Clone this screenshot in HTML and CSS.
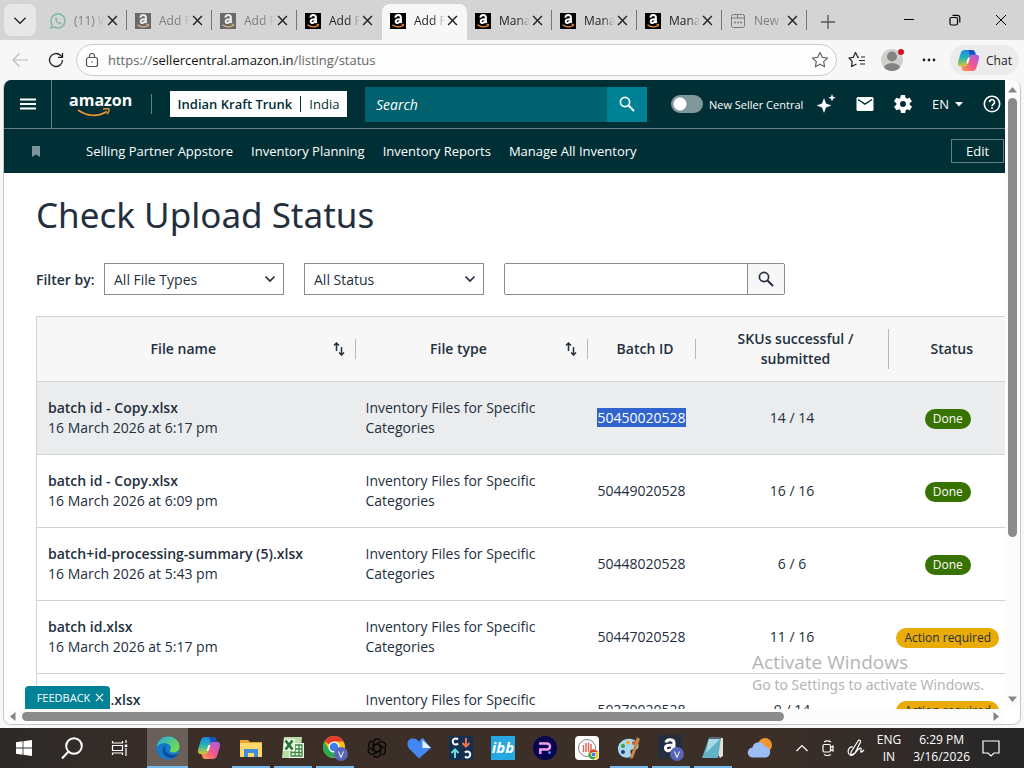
FILE: index.html
```
<!DOCTYPE html>
<html lang="en">
<head>
    <meta charset="utf-8">
    <title>Check Upload Status</title>
    <link rel="stylesheet" href="styles.css">
</head>
<body>
    <!-- Shared icons -->
    <svg class="symbols" width="0" height="0">
        <symbol id="amazon" viewBox="0 0 16 16">
            <rect width="16" height="16" fill="#000"/>
            <path d="M5.3 4.6C5.6 2.9 6.8 2 8.3 2c1.700 0 2.600 1 2.600 2.600v3.600c0 .8.4 1.200.8 1.700M10 6.200c-2.500-.1-4.300.4-4.300 2.300 0 2.400 3.900 2.100 4.300-.8" fill="none" stroke="#fff" stroke-width="2"/>
            <path d="M2.500 11.800c3.200 2.400 7.300 2.500 10.600.6" fill="none" stroke="#e8912d" stroke-width="1.200"/>
            <path d="M11.500 11.400l2.300-.1-.6 2" fill="none" stroke="#e8912d"/>
        </symbol>
        <symbol id="close" viewBox="0 0 10 10">
            <path d="M1 1l8 8M9 1L1 9" fill="none" stroke="currentColor" stroke-width="1.300"/>
        </symbol>
        <symbol id="chevron" viewBox="0 0 12 8">
            <path d="M1.500 1.500L6 6l4.500-4.500" fill="none" stroke="currentColor" stroke-width="1.700"/>
        </symbol>
        <symbol id="chevron-thin" viewBox="0 0 12 8">
            <path d="M1 1.500L6 6.500l5-5" fill="none" stroke="currentColor" stroke-width="1.100"/>
        </symbol>
        <symbol id="search" viewBox="0 0 16 16">
            <circle cx="6" cy="6" r="4.600" fill="none" stroke="currentColor" stroke-width="1.700"/>
            <path d="M9.500 9.500L15 15" stroke="currentColor" stroke-width="2"/>
        </symbol>
        <symbol id="sort" viewBox="0 0 12 16">
            <path d="M3.500 10V2M1 4.500L3.500 2 6 4.500M8.500 6v8M6 11.500L8.500 14l2.500-2.500" fill="none" stroke="currentColor" stroke-width="1.500"/>
        </symbol>
        <symbol id="copilot" viewBox="0 0 24 24">
            <linearGradient id="cpA" x1="0" y1="0" x2="0" y2="1"><stop offset="0" stop-color="#1787e8"/><stop offset=".5" stop-color="#28b6b0"/><stop offset="1" stop-color="#d7c42c"/></linearGradient>
            <linearGradient id="cpB" x1="1" y1="0" x2="0" y2="1"><stop offset="0" stop-color="#a45cf0"/><stop offset=".5" stop-color="#f0558b"/><stop offset="1" stop-color="#ff9d44"/></linearGradient>
            <path d="M9 1h7c2 0 2.500 1.500 3 3l.7 2H17c-2 0-2.800 1-3.300 2.700L11.400 16c-.5 1.700-1.400 2-3 2H4c-3 0-3.500-2-2.800-5L4 4c.6-2 2-3 5-3z" fill="url(#cpA)"/>
            <path d="M12 1h4c2 0 2.500 1.500 3 3l.7 2H17c-1.500 0-2.500.5-3 1.500z" fill="#1a4fc4"/>
            <path d="M15 23H8c-2 0-2.500-1.500-3-3l-.6-2H8c2 0 2.800-1 3.300-2.700L13.400 8c.5-1.500 1.400-2 3-2H20c3 0 3.500 2 2.800 5L20 20c-.6 2-2 3-5 3z" fill="url(#cpB)"/>
            <path d="M11.400 9h2l-1.800 6h-2z" fill="#fff"/>
        </symbol>
        <symbol id="chrome" viewBox="0 0 24 24">
            <circle cx="12" cy="12" r="11" fill="#fbc116"/>
            <path d="M12 12L2.500 6.500A11 11 0 0 1 21.500 6.500H12z" fill="#e33b2e"/>
            <path d="M12 12L7.200 14.800 2.500 6.500A11 11 0 0 0 12 23l4.800-8.200z" fill="#2da94f"/>
            <circle cx="12" cy="12" r="5.500" fill="#fff"/>
            <circle cx="12" cy="12" r="4.300" fill="#3b7ded"/>
        </symbol>
    </svg>

    <!-- Tab strip -->
    <div class="tabs">
        <button class="tab-menu" aria-label="Tab actions"><svg width="14" height="9"><use href="#chevron-thin"/></svg></button>
        <div class="tab faded">
            <svg width="16" height="16" viewBox="0 0 16 16" fill="none" stroke="#2f9f69" stroke-width="1.500"><path d="M1 15l1-3.600A7 7 0 1 1 4.700 14z"/><path d="M5.500 4.500c-1.200 1.500.3 5.800 4.700 6.900l1.300-1.500-1.700-1-.9.700c-1-.3-1.900-1.300-2.100-2.200l.6-.9-.6-1.900z" fill="#2f9f69" stroke="none"/></svg>
            <span class="tab-title">(11) W</span>
            <button class="tab-close" aria-label="Close tab"><svg width="11" height="11"><use href="#close"/></svg></button>
        </div>
        <div class="tab faded">
            <svg width="16" height="16"><use href="#amazon"/></svg>
            <span class="tab-title">Add P</span>
            <button class="tab-close" aria-label="Close tab"><svg width="11" height="11"><use href="#close"/></svg></button>
        </div>
        <div class="tab faded">
            <svg width="16" height="16"><use href="#amazon"/></svg>
            <span class="tab-title">Add P</span>
            <button class="tab-close" aria-label="Close tab"><svg width="11" height="11"><use href="#close"/></svg></button>
        </div>
        <div class="tab no-line">
            <svg width="16" height="16"><use href="#amazon"/></svg>
            <span class="tab-title">Add P</span>
            <button class="tab-close" aria-label="Close tab"><svg width="11" height="11"><use href="#close"/></svg></button>
        </div>
        <div class="tab active">
            <svg width="16" height="16"><use href="#amazon"/></svg>
            <span class="tab-title">Add P</span>
            <button class="tab-close" aria-label="Close tab"><svg width="11" height="11"><use href="#close"/></svg></button>
        </div>
        <div class="tab">
            <svg width="16" height="16"><use href="#amazon"/></svg>
            <span class="tab-title">Mana</span>
            <button class="tab-close" aria-label="Close tab"><svg width="11" height="11"><use href="#close"/></svg></button>
        </div>
        <div class="tab">
            <svg width="16" height="16"><use href="#amazon"/></svg>
            <span class="tab-title">Mana</span>
            <button class="tab-close" aria-label="Close tab"><svg width="11" height="11"><use href="#close"/></svg></button>
        </div>
        <div class="tab">
            <svg width="16" height="16"><use href="#amazon"/></svg>
            <span class="tab-title">Mana</span>
            <button class="tab-close" aria-label="Close tab"><svg width="11" height="11"><use href="#close"/></svg></button>
        </div>
        <div class="tab faded">
            <svg width="16" height="16" viewBox="0 0 16 16" fill="none" stroke="#222"><rect x="1.500" y="1.500" width="13" height="13" rx="2"/><path d="M1.500 5h6V1.500M7.500 5h7"/><path d="M4 9.500h2m1 0h2m1 0h2" stroke-width="1.600"/></svg>
            <span class="tab-title">New t</span>
            <button class="tab-close" aria-label="Close tab"><svg width="11" height="11"><use href="#close"/></svg></button>
        </div>
        <button class="new-tab" aria-label="New tab"><svg width="16" height="16" viewBox="0 0 16 16" stroke="#555" stroke-width="1.300"><path d="M8 1v14M1 8h14"/></svg></button>
        <div class="window-buttons">
            <button aria-label="Minimize"><svg width="12" height="12" viewBox="0 0 12 12" stroke="#000"><path d="M1 5.500h10"/></svg></button>
            <button aria-label="Restore"><svg width="12" height="12" viewBox="0 0 12 12" fill="none" stroke="#000" stroke-width="1.200"><rect x="1" y="3.500" width="7.500" height="7.500" rx="1.500"/><path d="M3.500 1.300h5a2.300 2.300 0 0 1 2.300 2.300v5"/></svg></button>
            <button aria-label="Close"><svg width="12" height="12" viewBox="0 0 12 12" stroke="#000"><path d="M1 1l10 10M11 1L1 11"/></svg></button>
        </div>
    </div>

    <!-- Address bar -->
    <div class="toolbar">
        <button class="tool" aria-label="Back"><svg width="18" height="16" viewBox="0 0 18 16" fill="none" stroke="#bbb" stroke-width="1.200"><path d="M17 8H2M8.500 1.500L2 8l6.500 6.500"/></svg></button>
        <button class="tool" aria-label="Reload"><svg width="16" height="16" viewBox="0 0 16 16" fill="none" stroke="#222" stroke-width="1.300"><path d="M14.500 8a6.500 6.500 0 1 1-2-4.700L14.500 5"/><path d="M14.500 1v4.300H10"/></svg></button>
        <div class="address">
            <svg width="14" height="16" viewBox="0 0 14 16" fill="none" stroke="#555" stroke-width="1.200"><rect x="1.500" y="5.500" width="11" height="9" rx="2"/><path d="M4.500 5.500V4a2.500 2.500 0 0 1 5 0v1.500"/><circle cx="7" cy="10" r=".8" fill="#555" stroke="none"/></svg>
            <span class="url">https://<b>sellercentral.amazon.in</b>/listing/status</span>
            <svg width="18" height="18" viewBox="0 0 18 18" fill="none" stroke="#666" stroke-width="1.200" stroke-linejoin="round"><path d="M9 1.500l2.300 4.800 5.200.7-3.800 3.600.9 5.200L9 13.300l-4.600 2.500.9-5.200L1.500 7l5.200-.7z"/></svg>
        </div>
        <button class="tool" aria-label="Favorites"><svg width="18" height="18" viewBox="0 0 18 18" fill="none" stroke="#222" stroke-width="1.200" stroke-linejoin="round"><path d="M11 6.300H9.800L7.500 1.500 5.300 6.300 1 7l3.200 3.400-.7 5.100 5-2.500M11 9.500h6M13 6h4M12 13h5"/></svg></button>
        <button class="tool" aria-label="Profile"><svg width="26" height="24" viewBox="0 0 26 24"><clipPath id="face"><circle cx="12" cy="12" r="11"/></clipPath><g clip-path="url(#face)"><path d="M0 0h24v24H0z" fill="#d2d0ce"/><circle cx="12" cy="8.500" r="5" fill="#858381"/><ellipse cx="12" cy="21" rx="8.500" ry="6" fill="#858381"/></g><circle cx="21" cy="4" r="3" fill="#d9101c"/></svg></button>
        <button class="tool" aria-label="Settings and more"><svg width="14" height="4" fill="#222"><circle cx="2" cy="2" r="1.400"/><circle cx="7" cy="2" r="1.400"/><circle cx="12" cy="2" r="1.400"/></svg></button>
        <button class="chat"><svg width="23" height="23"><use href="#copilot"/></svg>Chat</button>
    </div>

    <div class="frame">
        <div class="view">
            <header class="top">
                <button class="menu" aria-label="Menu"><svg width="16" height="12" viewBox="0 0 16 12" stroke="#fff" stroke-width="2"><path d="M0 1.500h16M0 6h16M0 10.500h16"/></svg></button>
                <a class="logo" href="#">amazon<svg width="34" height="9" viewBox="0 0 34 9" fill="none" stroke="#f0962e" stroke-width="1.700"><path d="M1 2c9 6.500 20 7 29 1.500"/><path d="M26 1.300c3-.8 5.500-.8 6 0s-.5 3-2 5" stroke-width="1.400"/></svg></a>
                <button class="account"><b>Indian Kraft Trunk</b><span>India</span></button>
                <form class="site-search">
                    <input type="text" placeholder="Search" aria-label="Search">
                    <button type="button" aria-label="Search"><svg width="16" height="16"><use href="#search"/></svg></button>
                </form>
                <label class="switch"><input type="checkbox"><span>New Seller Central</span></label>
                <nav class="top-icons">
                    <button aria-label="Assistant"><svg width="20" height="20" viewBox="0 0 20 20" fill="#fff"><path d="M8 4l2 5.500 5.500 2L10 13.500 8 19l-2-5.500L.5 11.500 6 9.500zM16 0l1 2.700 2.700 1L17 4.700 16 7.500l-1-2.800-2.700-1 2.700-1z"/></svg></button>
                    <button aria-label="Messages"><svg width="18" height="14" viewBox="0 0 18 14"><rect x=".5" width="17" height="14" rx="1.500" fill="#fff"/><path d="M2 2.500l7 4.700 7-4.700" fill="none" stroke="#002f36" stroke-width="1.500"/></svg></button>
                    <button aria-label="Settings"><svg width="18" height="18" viewBox="2 2 20 20" fill="#fff"><path d="M19.400 13a7.500 7.500 0 0 0 0-2l2.100-1.600a.5.5 0 0 0 .1-.7l-2-3.400a.5.5 0 0 0-.6-.2l-2.500 1a7 7 0 0 0-1.700-1l-.4-2.600A.5.5 0 0 0 14 2h-4a.5.5 0 0 0-.5.4l-.4 2.700a7 7 0 0 0-1.700 1l-2.500-1a.5.5 0 0 0-.6.200l-2 3.400c-.1.200 0 .5.100.7L4.600 11a7.500 7.500 0 0 0 0 2l-2.100 1.600a.5.5 0 0 0-.1.700l2 3.400c.1.200.4.300.6.200l2.500-1a7 7 0 0 0 1.700 1l.4 2.600c0 .3.200.5.500.5h4c.3 0 .5-.2.500-.4l.4-2.700a7 7 0 0 0 1.700-1l2.500 1c.2.100.5 0 .6-.2l2-3.400a.5.5 0 0 0-.1-.7zM12 15.300a3.300 3.300 0 1 1 0-6.600 3.300 3.300 0 0 1 0 6.600z"/></svg></button>
                    <button class="lang">EN<svg width="8" height="5" fill="#fff"><path d="M0 0h8L4 4.500z"/></svg></button>
                    <button aria-label="Help"><svg width="18" height="18" viewBox="0 0 18 18" fill="none" stroke="#fff" stroke-width="1.600"><circle cx="9" cy="9" r="7.700"/><path d="M6.500 7.200a2.500 2.500 0 1 1 3.900 2c-.9.700-1.400 1-1.400 2M9 12.300v1.700"/></svg></button>
                </nav>
            </header>
            <nav class="shortcuts">
                <svg class="bookmark" width="8" height="11" fill="#7b979b"><path d="M0 0h8v11L4 8.500 0 11z"/></svg>
                <a href="#">Selling Partner Appstore</a>
                <a href="#">Inventory Planning</a>
                <a href="#">Inventory Reports</a>
                <a href="#">Manage All Inventory</a>
                <button class="edit">Edit</button>
            </nav>

            <main class="content">
                <h1>Check Upload Status</h1>
                <div class="filters">
                    <label for="fileType">Filter by:</label>
                    <div class="select">
                        <select id="fileType"><option>All File Types</option></select>
                        <svg width="12" height="8"><use href="#chevron"/></svg>
                    </div>
                    <div class="select">
                        <select aria-label="Status"><option>All Status</option></select>
                        <svg width="12" height="8"><use href="#chevron"/></svg>
                    </div>
                    <form class="file-search">
                        <input type="text" aria-label="Search files">
                        <button type="button" aria-label="Search files"><svg width="16" height="16"><use href="#search"/></svg></button>
                    </form>
                </div>

                <table class="uploads">
                    <colgroup><col class="c-name"><col class="c-type"><col class="c-batch"><col class="c-skus"><col class="c-status"></colgroup>
                    <thead>
                        <tr>
                            <th><div class="head sortable"><span>File name</span><svg width="12" height="16"><use href="#sort"/></svg></div></th>
                            <th><div class="head sortable"><span>File type</span><svg width="12" height="16"><use href="#sort"/></svg></div></th>
                            <th><div class="head"><span>Batch ID</span></div></th>
                            <th><div class="head"><span>SKUs successful / submitted</span></div></th>
                            <th><div class="head last"><span>Status</span></div></th>
                        </tr>
                    </thead>
                    <tbody>
                        <tr class="selected">
                            <td><b>batch id - Copy.xlsx</b><br>16 March 2026 at 6:17 pm</td>
                            <td>Inventory Files for Specific Categories</td>
                            <td class="num"><mark>50450020528</mark></td>
                            <td class="num">14 / 14</td>
                            <td class="num"><span class="badge done">Done</span></td>
                        </tr>
                        <tr>
                            <td><b>batch id - Copy.xlsx</b><br>16 March 2026 at 6:09 pm</td>
                            <td>Inventory Files for Specific Categories</td>
                            <td class="num">50449020528</td>
                            <td class="num">16 / 16</td>
                            <td class="num"><span class="badge done">Done</span></td>
                        </tr>
                        <tr>
                            <td><b>batch+id-processing-summary (5).xlsx</b><br>16 March 2026 at 5:43 pm</td>
                            <td>Inventory Files for Specific Categories</td>
                            <td class="num">50448020528</td>
                            <td class="num">6 / 6</td>
                            <td class="num"><span class="badge done">Done</span></td>
                        </tr>
                        <tr>
                            <td><b>batch id.xlsx</b><br>16 March 2026 at 5:17 pm</td>
                            <td>Inventory Files for Specific Categories</td>
                            <td class="num">50447020528</td>
                            <td class="num">11 / 16</td>
                            <td class="num"><span class="badge action">Action required</span></td>
                        </tr>
                        <tr>
                            <td><b>batch id1.xlsx</b><br>16 March 2026</td>
                            <td>Inventory Files for Specific Categories</td>
                            <td class="num">50370020528</td>
                            <td class="num">9 / 14</td>
                            <td class="num"><span class="badge action">Action required</span></td>
                        </tr>
                    </tbody>
                </table>
            </main>
            <button class="feedback">FEEDBACK<svg width="9" height="9"><use href="#close"/></svg></button>
        </div>
        <div class="scroll-y">
            <svg width="9" height="6" fill="#858585"><path d="M0 5.500h9L4.500 0z"/></svg>
            <div class="track"><div class="thumb"></div></div>
            <svg width="9" height="6" fill="#858585"><path d="M0 .5h9L4.500 6z"/></svg>
        </div>
        <div class="scroll-x">
            <svg width="6" height="9" fill="#858585"><path d="M5.500 0v9L0 4.500z"/></svg>
            <div class="track"><div class="thumb"></div></div>
            <svg width="6" height="9" fill="#858585"><path d="M.5 0v9L6 4.500z"/></svg>
        </div>
        <div class="watermark"><p class="big">Activate Windows</p><p>Go to Settings to activate Windows.</p></div>
    </div>

    <!-- Taskbar -->
    <footer class="taskbar">
        <button class="task wide" aria-label="Start"><svg width="16" height="16" viewBox="0 0 16 16" fill="#fff"><path d="M0 2.200l6.600-.9v6.300H0zM7.400 1.200L16 0v7.600H7.400zM0 8.400h6.600v6.300L0 13.800zM7.400 8.400H16V16l-8.600-1.200z"/></svg></button>
        <button class="task wide" aria-label="Search"><svg width="24" height="24" viewBox="0 0 24 24" fill="none" stroke="#fff" stroke-width="2"><circle cx="14" cy="10" r="7.800"/><path d="M8.500 15.500L2 22.500"/></svg></button>
        <button class="task wide" aria-label="Task view"><svg width="18" height="18" viewBox="0 0 18 18" fill="none" stroke="#fff" stroke-width="1.200"><path d="M1.500 2V4h10V2M1.500 16v-2h10v2M1.500 6.500h10v5h-10zM15 1v3M15 9v8"/><path d="M13.700 5.500h2.600v2.600h-2.600z" fill="#fff" stroke="none"/></svg></button>
        <button class="task open current" aria-label="Edge"><svg width="24" height="24" viewBox="0 0 24 24"><defs><linearGradient id="edA" x1="0" y1="0" x2="1" y2=".6"><stop offset="0" stop-color="#28a5e5"/><stop offset="1" stop-color="#6fdd4b"/></linearGradient></defs><circle cx="12" cy="12" r="11.500" fill="#1279cd"/><path d="M.5 12C1 5 6 .5 12 .5c7 0 11.500 5 11.500 10 0 4-3 6-6.500 6-2.500 0-3.500-1-3-2 1.500-2 1-6-3-7C6 6.500 1.500 8.500.5 12z" fill="url(#edA)"/><path d="M9 9.500c-4 3-3 12 6 12.500 3 0 6-2 7-4-8 3-14-1-13-8.500z" fill="#0b4d96"/></svg></button>
        <button class="task" aria-label="Copilot"><svg width="24" height="24"><use href="#copilot"/></svg></button>
        <button class="task open" aria-label="File Explorer"><svg width="24" height="24" viewBox="0 0 24 24"><path d="M1 4h8l2 2h12v15H1z" fill="#e6a52d"/><path d="M1 7h22v14H1z" fill="#ffd76b"/><path d="M5 13h14v8h-4v-4H9v4H5z" fill="#3a8edb"/></svg></button>
        <button class="task open" aria-label="Excel"><svg width="24" height="24" viewBox="0 0 24 24"><path d="M3 1h18l-2 21H1z" fill="#b9dda6"/><path d="M8 7h15v15H8z" fill="#eef6e9"/><path d="M10 9h11v11H10zM10 13h11M10 16.500h11M14 9v11M18 9v11" fill="none" stroke="#3f8743" stroke-width="1.300"/><path d="M3 3h11v12H2z" fill="#e9f4e3"/><path d="M4.500 4.500l7 9M11.500 4.500l-7 9" stroke="#237335" stroke-width="2.600"/></svg></button>
        <button class="task open" aria-label="Chrome"><svg width="26" height="26" viewBox="0 0 26 26"><use href="#chrome" width="24" height="24"/><circle cx="19" cy="19" r="7" fill="#5965b8"/><path d="M16.500 16.500l2.500 6 2.500-6" fill="none" stroke="#fff"/></svg></button>
        <button class="task" aria-label="ChatGPT"><svg width="22" height="22" viewBox="0 0 22 22" fill="none" stroke="#0c0a09" stroke-width="1.500"><g id="petal"><path d="M7.500 12.500V5.500a3.800 3.800 0 0 1 7-2"/><path d="M7.500 8.800L11 6.800l5.500 3.200"/></g><use href="#petal" transform="rotate(60 11 11)"/><use href="#petal" transform="rotate(120 11 11)"/><use href="#petal" transform="rotate(180 11 11)"/><use href="#petal" transform="rotate(240 11 11)"/><use href="#petal" transform="rotate(300 11 11)"/></svg></button>
        <button class="task" aria-label="Health"><svg width="24" height="22" viewBox="0 0 24 22"><path d="M12 21.500L2.500 12C-1 8 0 1.500 6 1.500c3 0 5 1.500 6 3.500 1-2 2-3.500 4-4l8 10z" fill="#4387f3"/><path d="M15.500 3v8H24z" fill="#e8f1ff"/></svg></button>
        <button class="task" aria-label="Converter"><svg width="24" height="24" viewBox="0 0 24 24" fill="none" stroke-width="2"><path d="M0 0h24v24H0z" fill="#15304e"/><path d="M9 3.500a3 3 0 1 0 0 4M16 16.500a3 3 0 1 1 0 4" stroke="#fff"/><path d="M17 2v8M13.500 7l3.500 3.500L20.500 7" stroke="#e9744b"/><path d="M6 22v-8M2.500 17L6 13.500 9.500 17" stroke="#68dce0"/></svg></button>
        <button class="task"><span class="ibb">ibb</span></button>
        <button class="task" aria-label="P app"><svg width="24" height="24" viewBox="0 0 24 24"><circle cx="12" cy="12" r="12" fill="#080452"/><path d="M6 7.500h8a3 3 0 0 1 0 6H7.300V18" fill="none" stroke="#ef9fe3" stroke-width="2.500"/><circle cx="16.500" cy="16.500" r="1.500" fill="#3c8ff5"/></svg></button>
        <button class="task" aria-label="Web app"><svg width="24" height="24" viewBox="0 0 24 24"><rect width="24" height="24" rx="4" fill="#fff"/><circle cx="12" cy="12" r="8.500" fill="none" stroke="#888"/><path d="M8.500 9v7M11 7v9M13.500 6.500v9M16 8v6" stroke="#dd685f" stroke-width="1.500"/><use href="#chrome" x="13" y="13" width="11" height="11"/></svg></button>
        <button class="task open" aria-label="Paint"><svg width="24" height="24" viewBox="0 0 24 24"><path d="M1 14C0 7 7 2 14 3c6 1 9 5 7 9-2 3-5 0-7 2-2 3 2 5-1 7-4 2-11 0-12-7z" fill="#a9d5ee"/><circle cx="6" cy="10" r="2" fill="#37a34a"/><circle cx="11" cy="6.500" r="2" fill="#e9b428"/><circle cx="17" cy="7" r="2" fill="#db4b35"/><circle cx="6" cy="16" r="2" fill="#263a83"/><path d="M20 1l3 2-7 19-3 1 1-4z" fill="#c98640"/></svg></button>
        <button class="task open" aria-label="Amazon"><svg width="26" height="26" viewBox="0 0 26 26"><path d="M0 0h24v24H0z" fill="#232f3e"/><path d="M8 7.500c1-4 8-3.500 8 .5V15M15 10c-4 0-8 0-7.500 3.500S14 16 15 12" fill="none" stroke="#fff" stroke-width="3"/><circle cx="19" cy="19" r="7" fill="#5965b8"/><path d="M16.500 16.500l2.500 6 2.500-6" fill="none" stroke="#fff"/></svg></button>
        <button class="task open" aria-label="Notepad"><svg width="24" height="24" viewBox="0 0 24 24"><path d="M8 2h14v18l-3 2z" fill="#e4e1d4"/><path d="M8 2h12l-3 20H1z" fill="#62b1c5"/><path d="M8 2h12L5 17z" fill="#a8dbe5"/><path d="M8 2h12" stroke="#567" stroke-width="2"/></svg></button>
        <div class="tray">
            <svg class="weather" width="26" height="22" viewBox="0 0 26 22"><circle cx="18" cy="8" r="7" fill="#f3952d"/><path d="M6 20.500a5 5 0 0 1-.5-10 6.500 6.500 0 0 1 12.500-1 5.600 5.600 0 0 1 1 11z" fill="#9bbcf5"/></svg>
            <svg width="14" height="8" viewBox="0 0 14 8" fill="none" stroke="#fff" stroke-width="1.200"><path d="M1.500 7L7 1.500 12.500 7"/></svg>
            <svg width="14" height="16" viewBox="0 0 14 16" fill="none" stroke="#fff" stroke-width="1.200"><rect x="2" y="4.500" width="7.500" height="7.500" rx="1.500"/><path d="M9.500 7.500l2.500-1.500v5l-2.500-1.500M3 2c2-1.200 5-1.200 7 0M3 14.500c2 1.200 5 1.200 7 0"/></svg>
            <svg width="18" height="18" viewBox="0 0 18 18" fill="none" stroke="#fff" stroke-width="1.200"><path d="M4 13L11 2c1-1.500 3-.5 2.500 1L8 14l-4 2zM6 8c-4-1-6 4-4 7s5 1 7-2 6-6 5-2 2 1 3 0"/></svg>
            <p class="stack">ENG<br>IN</p>
            <p class="stack">6:29 PM<br>3/16/2026</p>
            <svg width="18" height="18" viewBox="0 0 18 18" fill="none" stroke="#fff" stroke-width="1.200"><path d="M1 2h16v12h-5l-3 3-3-3H1z"/></svg>
        </div>
    </footer>
</body>
</html>
```
FILE: styles.css
```
* {
    box-sizing: border-box;
}
body {
    margin: 0;
    height: 100vh;
    display: flex;
    flex-direction: column;
    overflow: hidden;
    background: #f7f7f7;
    color: #232f3e;
    font-family: "Open Sans", "Noto Sans", sans-serif;
    font-size: 13px;
}
button, input, select {
    margin: 0;
    padding: 0;
    border: 0;
    background: none;
    color: inherit;
    font: inherit;
}
button {
    display: flex;
    align-items: center;
    justify-content: center;
}
p {
    margin: 0;
}
a {
    color: inherit;
    text-decoration: none;
}
svg {
    flex: none;
    display: block;
}
.symbols {
    position: absolute;
}

/* Tab strip */
.tabs {
    flex: none;
    display: flex;
    align-items: flex-end;
    height: 40px;
    padding-left: 4px;
    background: #d4d4d4;
    color: #222;
    font-size: 12px;
}
.tab-menu {
    width: 32px;
    height: 32px;
    margin: 0 6px 4px 0;
    border-radius: 8px;
    background: #e8e8e8;
}
.tab {
    display: flex;
    align-items: center;
    width: 85px;
    height: 36px;
    padding: 0 9px 3px 8px;
    background: linear-gradient(#777, #777) right 6px / 1px 20px no-repeat;
}
.tab.no-line {
    background: none;
}
.tab.active {
    border-radius: 8px 8px 0 0;
    background: #f7f7f7;
}
.tab-title {
    flex: 1;
    margin-left: 8px;
    overflow: hidden;
    white-space: nowrap;
    mask-image: linear-gradient(to right, #000 60%, transparent);
}
.tab-close {
    width: 11px;
    height: 20px;
    margin-left: 2px;
}
.faded > svg, .faded .tab-title {
    opacity: 0.5;
}
.new-tab {
    width: 42px;
    height: 34px;
    padding-bottom: 3px;
}
.window-buttons {
    display: flex;
    margin-left: auto;
}
.window-buttons button {
    width: 46px;
    height: 40px;
}

/* Address bar */
.toolbar {
    flex: none;
    display: flex;
    align-items: center;
    height: 40px;
    padding: 0 5px 0 2px;
    color: #222;
}
.tool {
    width: 36px;
    height: 32px;
}
.address {
    flex: 1;
    display: flex;
    align-items: center;
    gap: 9px;
    height: 32px;
    margin: 0 2px;
    padding: 0 7px 0 8px;
    border: 1px solid #ccc;
    border-radius: 16px;
    background: #fdfdfd;
}
.url {
    flex: 1;
    color: #666;
}
.url b {
    color: #111;
    font-weight: 400;
}
.chat {
    gap: 6px;
    width: 69px;
    height: 30px;
    margin-left: 3px;
    border-radius: 15px;
    background: #ebebeb;
    font-size: 12px;
}

/* Page frame with its scroll bars */
.frame {
    position: relative;
    flex: 1;
    min-height: 0;
    display: grid;
    grid-template-columns: minmax(0, 1fr) 15px;
    grid-template-rows: minmax(0, 1fr) 15px;
    margin: 0 3px 3px;
    border: 1px solid #c6c6c6;
    border-top: 0;
    border-radius: 8px;
    overflow: hidden;
    background: #fff;
}
.view {
    position: relative;
    overflow: hidden;
}
.scroll-y, .scroll-x {
    display: flex;
    align-items: center;
    background: #fcfcfc;
}
.scroll-y {
    flex-direction: column;
    padding: 7px 0;
}
.scroll-x {
    padding: 0 6px;
}
.track {
    flex: 1;
}
.scroll-y .track {
    margin: 5px 0;
}
.scroll-x .track {
    margin: 0 6px;
}
.scroll-x .thumb {
    width: 79%;
    height: 9px;
    border-radius: 5px;
    background: #8b8b8b;
}
.scroll-y .thumb {
    width: 9px;
    height: 74%;
    border-radius: 5px;
    background: #8b8b8b;
}

/* Seller header */
.top {
    display: flex;
    align-items: center;
    height: 49px;
    border-bottom: 1px solid #667f83;
    background: #002f36;
    color: #fff;
}
.menu {
    width: 48px;
    height: 48px;
    border-right: 1px solid #667f83;
}
.logo {
    display: flex;
    flex-direction: column;
    width: 100px;
    height: 20px;
    margin-right: 18px;
    padding-left: 17px;
    border-right: 1px solid #667f83;
    font-size: 16px;
    font-weight: 700;
    line-height: 13px;
}
.logo svg {
    margin: 1px 0 0 8px;
}
.account {
    width: 177px;
    height: 26px;
    background: #fff;
    color: #002f36;
    white-space: nowrap;
}
.account b {
    font-weight: 600;
}
.account span {
    margin-left: 8px;
    padding-left: 8px;
    border-left: 1px solid #002f36;
    line-height: 16px;
}
.site-search {
    flex: 1;
    display: flex;
    height: 35px;
    margin: 0 24px 0 18px;
}
.site-search input {
    flex: 1;
    min-width: 0;
    padding: 0 11px;
    background: #00626f;
    font-size: 14px;
}
.site-search input::placeholder {
    color: #fff;
    font-style: italic;
}
.site-search button {
    width: 40px;
    background: #008296;
}
.switch {
    display: flex;
    align-items: center;
    gap: 6px;
    font-size: 11px;
    font-weight: 500;
    white-space: nowrap;
}
.switch span {
    width: 92px;
}
.switch input {
    appearance: none;
    width: 32px;
    height: 18px;
    border-radius: 9px;
    background: radial-gradient(circle at 9px 9px, #fff 6px, transparent 7px) #80979b;
}
.top-icons {
    display: flex;
    align-items: center;
    gap: 20px;
    margin: 0 4px 0 15px;
}
.lang {
    gap: 6px;
    font-weight: 500;
}
.shortcuts {
    display: flex;
    align-items: center;
    gap: 18px;
    height: 44px;
    padding: 0 1px 0 28px;
    background: #002f36;
    color: #fff;
    font-weight: 500;
    white-space: nowrap;
}
.bookmark {
    margin-right: 28px;
}
.edit {
    width: 53px;
    height: 24px;
    margin-left: auto;
    border: 1px solid #667f83;
}

/* Upload status */
.content {
    padding: 19px 0 0 32px;
    font-size: 14px;
}
h1 {
    margin: 0;
    font-family: "Noto Sans", sans-serif;
    font-size: 35px;
    font-weight: 400;
    line-height: 46px;
}
.filters {
    display: flex;
    align-items: center;
    gap: 20px;
    height: 32px;
    margin: 25px 0 21px;
}
.filters label {
    width: 58px;
    margin-right: -10px;
    font-weight: 600;
    white-space: nowrap;
}
.select {
    position: relative;
}
.select select {
    appearance: none;
    width: 180px;
    height: 32px;
    padding: 0 9px;
    border: 1px solid #888c8c;
}
.select svg {
    position: absolute;
    top: 12px;
    right: 8px;
    pointer-events: none;
}
.file-search {
    display: flex;
    height: 32px;
    border: 1px solid #888c8c;
    border-radius: 2px;
}
.file-search input {
    width: 242px;
}
.file-search button {
    width: 37px;
    border-left: 1px solid #888c8c;
    background: #f7f7f7;
}
.uploads {
    width: 100%;
    min-width: 971px;
    table-layout: fixed;
    border-collapse: collapse;
    border: 1px solid #d0d3d4;
    line-height: 20px;
}
.c-name {
    width: 319px;
}
.c-type {
    width: 232px;
}
.c-batch {
    width: 108px;
}
.c-skus {
    width: 193px;
}
.c-status {
    width: 119px;
}
.uploads th {
    height: 65px;
    padding: 0;
    background: #f7f7f7;
    font-weight: 600;
}
.head {
    padding: 0 30px 0 38px;
    border-right: 1px solid #b4b9ba;
}
.head.sortable {
    display: flex;
    align-items: center;
    gap: 3px;
    padding: 0 10px 0 0;
}
.head.sortable span {
    flex: 1;
}
.head.last {
    padding: 0 0 0 8px;
    border: 0;
}
.uploads th:nth-child(3) .head {
    padding: 0 0 0 8px;
}
.uploads td {
    height: 73px;
    padding: 0 11px;
    border-top: 1px solid #d0d3d4;
}
.uploads td:nth-child(2) {
    padding: 0 40px 0 10px;
}
.uploads td b {
    font-weight: 600;
}
.uploads .num {
    padding: 0;
    text-align: center;
}
.selected {
    background: #eaeced;
}
mark {
    background: #3163ce;
    color: #fff;
}
.badge {
    display: inline-block;
    padding: 0 8px;
    border-radius: 10px;
    font-size: 12px;
    white-space: nowrap;
}
.done {
    background: #387200;
    color: #fff;
    font-weight: 500;
}
.action {
    background: #e8ab08;
}
.feedback {
    position: absolute;
    left: 21px;
    bottom: 0;
    gap: 5px;
    width: 85px;
    height: 23px;
    padding-left: 6px;
    border-radius: 4px 4px 0 0;
    background: #008296;
    color: #fff;
    font-size: 11px;
    font-weight: 500;
}
.watermark {
    position: absolute;
    right: 36px;
    bottom: 29px;
    color: #b4b4b4;
    font-family: "Noto Sans", sans-serif;
    font-size: 14px;
    line-height: 20px;
}
.watermark .big {
    font-family: "Open Sans", sans-serif;
    font-size: 19px;
    line-height: 26px;
}

/* Taskbar */
.taskbar {
    flex: none;
    display: flex;
    height: 40px;
    background: linear-gradient(to right, #2c2928, #3c2f28 20%, #3c2f28 75%, #252628);
    color: #fff;
    font-size: 12px;
}
.task {
    width: 38px;
    margin: 0 2px;
}
.task.wide {
    width: 48px;
    margin: 0;
}
.wide + .open {
    margin-left: 3px;
}
.open {
    border-bottom: 2px solid #76b9ed;
    padding-top: 2px;
}
.current {
    width: 41px;
    margin-right: 0;
    background: #6a5f59;
}
.ibb {
    width: 24px;
    height: 24px;
    background: #27a8e0;
    font-size: 15px;
    font-style: italic;
    font-weight: 700;
    line-height: 23px;
}
.tray {
    flex: 1;
    display: flex;
    align-items: center;
    justify-content: flex-end;
    gap: 12px;
    padding-right: 24px;
}
.weather {
    margin-right: 10px;
}
.stack {
    line-height: 17px;
    text-align: center;
}
```
